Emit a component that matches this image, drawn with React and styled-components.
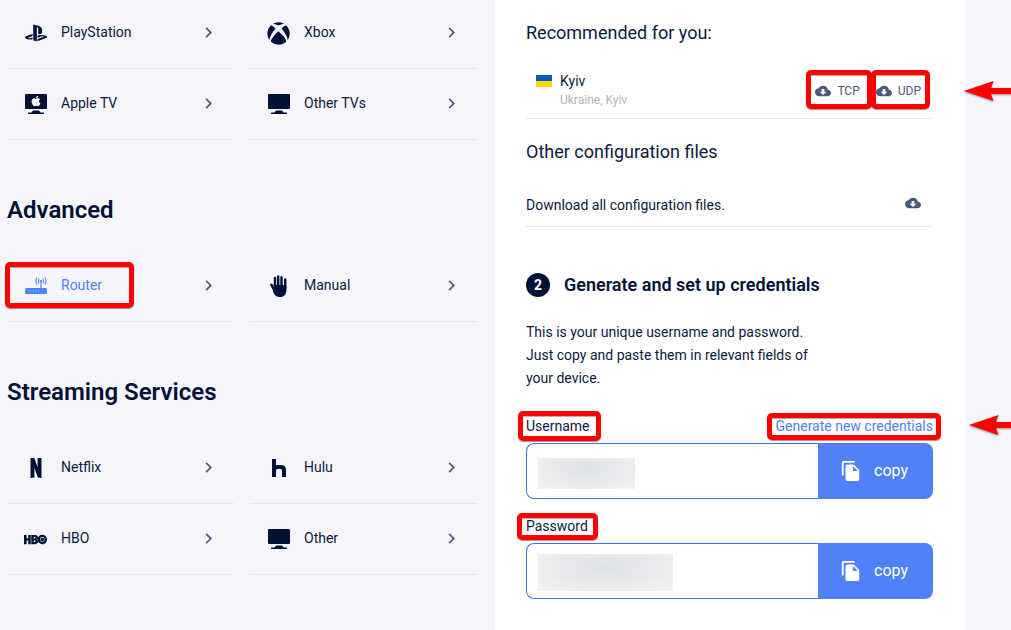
import React from "react";
import styled, { createGlobalStyle } from "styled-components";
import { FaApple, FaPlaystation, FaXbox } from "react-icons/fa";
import { SiHbo } from "react-icons/si";
import { MdChevronRight, MdCloudDownload, MdFileCopy } from "react-icons/md";

const color = {
  page: "#f5f5fb",
  navy: "#001138",
  text: "#0c1a40",
  slate: "#4c5b7d",
  muted: "#aeb3c0",
  line: "#e6e7ed",
  blue: "#5081f8",
  outline: "#3e72ea",
  mark: "#ff0000",
};

const GlobalStyle = createGlobalStyle`
  *, *::before, *::after { box-sizing: border-box; }
  body {
    margin: 0;
    background: ${color.page};
    color: ${color.text};
    font-family: Roboto, "Liberation Sans", sans-serif;
    font-size: 14px;
    line-height: 20px;
  }
  h2, h3, p { margin: 0; }
  button, input { font: inherit; }
`;

const Page = styled.div`
  display: grid;
  grid-template-columns: minmax(0, 494fr) minmax(0, 471fr) 46px;
  min-height: 100vh;
  overflow: hidden;
`;

const Devices = styled.nav`
  margin-top: -2px;
  padding: 0 17px 0 7px;
`;

const GroupTitle = styled.h2`
  padding: 56px 0 27px;
  color: ${color.navy};
  font-size: 24px;
  line-height: 28px;
  font-weight: 600;
`;

const DeviceGrid = styled.div`
  display: grid;
  grid-template-columns: repeat(2, minmax(0, 1fr));
  column-gap: 16px;
`;

const DeviceLink = styled.a`
  position: relative;
  display: flex;
  align-items: center;
  height: 71px;
  padding: 0 15px 0 16px;
  border-bottom: 1px solid ${color.line};
  color: ${(p) => (p.$active ? color.blue : color.text)};
  text-decoration: none;
`;

const IconSlot = styled.span`
  display: flex;
  justify-content: center;
  width: 25px;
  margin-right: 13px;
  color: ${(p) => (p.$active ? color.blue : color.navy)};
`;

const DeviceName = styled.span`
  flex: 1;
  padding-bottom: 2px;
`;

const ChevronSlot = styled.span`
  display: flex;
  padding-bottom: 2px;
  color: ${color.slate};
`;

const Panel = styled.main`
  display: flex;
  flex-direction: column;
  padding: 21px 32px 31px;
  background: #fff;
`;

const PanelTitle = styled.h3`
  font-size: 18px;
  line-height: 24px;
  font-weight: 400;
`;

const ServerRow = styled.div`
  position: relative;
  display: flex;
  justify-content: space-between;
  margin: 27px 0 21px;
  padding: 0 12px 9px 10px;
  border-bottom: 1px solid ${color.line};
`;

const Server = styled.div`
  display: grid;
  grid-template-columns: 16px auto;
  column-gap: 8px;
  row-gap: 1px;
  line-height: 18px;
`;

const Flag = styled.span`
  height: 12px;
  margin-top: 3px;
  background: linear-gradient(#005bbb 50%, #ffd500 50%);
`;

const Location = styled.span`
  grid-column: 2;
  font-size: 12px;
  color: ${color.muted};
`;

const Protocols = styled.div`
  display: flex;
  align-items: center;
  gap: 16px;
`;

const DownloadButton = styled.button`
  position: relative;
  display: flex;
  align-items: center;
  gap: 6px;
  padding: 0;
  border: 0;
  background: none;
  color: ${color.slate};
  font-size: 12px;
  line-height: 20px;
`;

const AllFilesRow = styled.div`
  display: flex;
  align-items: flex-start;
  justify-content: space-between;
  margin: 31px 0 45px;
  padding: 0 12px 11px 0;
  border-bottom: 1px solid ${color.line};
`;

const StepTitle = styled.h2`
  display: flex;
  align-items: flex-end;
  gap: 14px;
  height: 25px;
  color: ${color.navy};
  font-size: 18px;
  line-height: 25px;
  font-weight: 600;
`;

const StepNumber = styled.span`
  width: 24px;
  height: 24px;
  border-radius: 50%;
  background: ${color.navy};
  color: #fff;
  font-size: 14px;
  line-height: 24px;
  font-weight: 700;
  text-align: center;
`;

const StepText = styled.p`
  max-width: 300px;
  margin: 24px 0 26px;
  line-height: 23px;
`;

const Field = styled.div`
  & + & { margin-top: 17px; }
`;

const FieldHead = styled.div`
  position: relative;
  display: flex;
  justify-content: space-between;
  margin-bottom: 7px;
`;

const FieldLabel = styled.label`
  position: relative;
`;

const TextLink = styled.a`
  position: relative;
  color: ${color.blue};
  text-decoration: none;
`;

const FieldBox = styled.div`
  position: relative;
  display: flex;
  height: 56px;
`;

const FieldInput = styled.input`
  flex: 1;
  min-width: 0;
  padding: 0 12px;
  border: 1px solid ${color.outline};
  border-right: 0;
  border-radius: 8px 0 0 8px;
  background: #fff;
  outline: 0;
`;

const CopyButton = styled.button`
  display: flex;
  align-items: center;
  gap: 12px;
  width: 115px;
  padding: 0 0 0 22px;
  border: 0;
  border-radius: 0 8px 8px 0;
  background: ${color.blue};
  color: #fff;
  font-size: 16px;
`;

const Redaction = styled.span`
  position: absolute;
  left: 12px;
  top: ${(p) => p.$top}px;
  width: ${(p) => p.$width}px;
  height: ${(p) => p.$height}px;
  background: radial-gradient(ellipse at 50% 35%, #dfe2e6, #e8e9eb 50%, #f2f3f5);
`;

const Highlight = styled.span`
  position: absolute;
  inset: ${(p) => p.$inset};
  border: 5px solid ${color.mark};
  border-radius: 5px;
  box-shadow: 0 1px 1px rgba(60, 0, 0, 0.45), inset 0 1px 1px rgba(60, 0, 0, 0.35);
  pointer-events: none;
`;

const Pointer = styled.svg`
  position: absolute;
  left: calc(100% + ${(p) => p.$gap}px);
  top: ${(p) => p.$top}px;
  fill: ${color.mark};
  filter: drop-shadow(0 1px 1px rgba(0, 0, 0, 0.4));
`;

function Arrow({ gap, top }) {
  return (
    <Pointer width="60" height="22" viewBox="0 0 60 22" $gap={gap} $top={top} aria-hidden="true">
      <path d="M0 11 29.500 1 27 8H60V14H27L29.500 21Z" />
    </Pointer>
  );
}

function MonitorIcon({ children }) {
  return (
    <svg width="24" height="22" viewBox="0 0 24 22" fill="currentColor" aria-hidden="true">
      <rect x="1" y="1" width="22" height="15" rx="1" />
      <path d="M9 17.500h6l1.500 2H19a.7.7 0 0 1 .7 1.400H4.300A.7.7 0 0 1 5 19.500h2.500z" />
      {children}
    </svg>
  );
}

function AppleTvIcon() {
  return (
    <MonitorIcon>
      <FaApple x="6" y="2" size={12} color={color.page} />
    </MonitorIcon>
  );
}

function RouterIcon() {
  return (
    <svg width="24" height="20" viewBox="0 0 24 20" fill="none" stroke="currentColor" aria-hidden="true">
      <rect x="1" y="12" width="22" height="6" rx="1.500" fill="currentColor" stroke="none" />
      <path d="M17 12V5" strokeWidth="1.200" />
      <circle cx="17" cy="5" r="1.100" fill="currentColor" stroke="none" />
      <path
        d="M15.200 2.800q-1.500 2.200 0 4.400M18.800 2.800q1.500 2.200 0 4.400M13.200 1.500q-2.600 3.500 0 7M20.800 1.500q2.600 3.500 0 7"
        strokeWidth="1.100"
      />
      <path d="M4 15h12" stroke={color.page} strokeWidth="1" strokeDasharray="1 1.500" opacity=".55" />
    </svg>
  );
}

function HandIcon() {
  return (
    <svg width="22" height="24" viewBox="0 0 22 24" aria-hidden="true">
      <g fill="none" stroke="currentColor" strokeLinecap="round">
        <path d="M7 13V4M10.200 13V2.400M13.500 13V3.200M17.200 14V5.500" strokeWidth="2.400" />
        <path d="M3.400 10.800 6.500 16.500" strokeWidth="2.600" />
      </g>
      <path
        d="M5.800 11H18.400V16C18.400 20.500 16 23 12 23 8 23 6.300 20.800 5 17.500Z"
        fill="currentColor"
      />
    </svg>
  );
}

function NetflixIcon() {
  return (
    <svg width="12" height="20" viewBox="0 0 12 20" fill="currentColor" aria-hidden="true">
      <path d="M.5 0H4.300L7.600 9.200V0H11.500V20Q9.700 19.600 7.900 19.400L4.400 10V19.500Q2.400 19.600.5 20Z" />
    </svg>
  );
}

function HuluIcon() {
  return (
    <svg width="16" height="20" viewBox="0 0 16 20" fill="currentColor" aria-hidden="true">
      <path d="M1 1H5V7.200Q5.600 7 6.500 7H10Q15 7 15 12V19H11V12.500Q11 11 9.500 11H6.500Q5 11 5 12.500V19H1Z" />
    </svg>
  );
}

const groups = [
  {
    items: [
      { name: "PlayStation", icon: <FaPlaystation size={22} /> },
      { name: "Xbox", icon: <FaXbox size={23} /> },
      { name: "Apple TV", icon: <AppleTvIcon /> },
      { name: "Other TVs", icon: <MonitorIcon /> },
    ],
  },
  {
    title: "Advanced",
    items: [
      { name: "Router", icon: <RouterIcon />, active: true },
      { name: "Manual", icon: <HandIcon /> },
    ],
  },
  {
    title: "Streaming Services",
    items: [
      { name: "Netflix", icon: <NetflixIcon /> },
      { name: "Hulu", icon: <HuluIcon /> },
      { name: "HBO", icon: <SiHbo size={23} /> },
      { name: "Other", icon: <MonitorIcon /> },
    ],
  },
];

function DeviceGroup({ title, items }) {
  return (
    <section>
      {title && <GroupTitle>{title}</GroupTitle>}
      <DeviceGrid>
        {items.map(({ name, icon, active }) => (
          <DeviceLink key={name} href="#" $active={active} aria-current={active ? "page" : undefined}>
            <IconSlot $active={active}>{icon}</IconSlot>
            <DeviceName>{name}</DeviceName>
            <ChevronSlot>
              <MdChevronRight size={21} />
            </ChevronSlot>
            {active && <Highlight $inset="11px 100px 13px -2px" />}
          </DeviceLink>
        ))}
      </DeviceGrid>
    </section>
  );
}

function CredentialField({ id, label, mark, redaction, children }) {
  return (
    <Field>
      <FieldHead>
        <FieldLabel htmlFor={id}>
          {label}
          <Highlight $inset={mark} />
        </FieldLabel>
        {children}
      </FieldHead>
      <FieldBox>
        <FieldInput id={id} type="text" readOnly />
        <Redaction $top={redaction.top} $width={redaction.width} $height={redaction.height} />
        <CopyButton type="button">
          <MdFileCopy size={22} />
          copy
        </CopyButton>
      </FieldBox>
    </Field>
  );
}

export default function App() {
  return (
    <>
      <GlobalStyle />
      <Page>
        <Devices>
          {groups.map((group, i) => (
            <DeviceGroup key={i} {...group} />
          ))}
        </Devices>
        <Panel>
          <PanelTitle>Recommended for you:</PanelTitle>
          <ServerRow>
            <Server>
              <Flag />
              <span>Kyiv</span>
              <Location>Ukraine, Kyiv</Location>
            </Server>
            <Protocols>
              <DownloadButton type="button">
                <MdCloudDownload size={16} />
                TCP
                <Highlight $inset="-11px -12px -8px -9px" />
              </DownloadButton>
              <DownloadButton type="button">
                <MdCloudDownload size={16} />
                UDP
                <Highlight $inset="-11px -9px -8px -5px" />
              </DownloadButton>
            </Protocols>
            <Arrow gap={31} top={8} />
          </ServerRow>
          <PanelTitle>Other configuration files</PanelTitle>
          <AllFilesRow>
            <span>Download all configuration files.</span>
            <DownloadButton type="button" aria-label="Download all configuration files">
              <MdCloudDownload size={16} />
            </DownloadButton>
          </AllFilesRow>
          <StepTitle>
            <StepNumber>2</StepNumber>
            Generate and set up credentials
          </StepTitle>
          <StepText>
            This is your unique username and password. Just copy and paste them in relevant fields of your device.
          </StepText>
          <CredentialField
            id="username"
            label="Username"
            mark="-5px -11px -5px -8px"
            redaction={{ top: 15, width: 97, height: 31 }}
          >
            <TextLink href="#">
              Generate new credentials
              <Highlight $inset="-3px -8px -4px -9px" />
            </TextLink>
            <Arrow gap={36} top={-2} />
          </CredentialField>
          <CredentialField
            id="password"
            label="Password"
            mark="-3px -10px -4px -9px"
            redaction={{ top: 11, width: 135, height: 37 }}
          />
        </Panel>
      </Page>
    </>
  );
}
